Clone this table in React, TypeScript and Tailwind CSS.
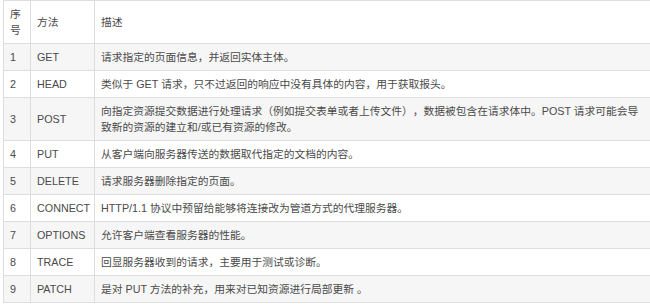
const rows: [string, string, string][] = [
  ['1', 'GET', '请求指定的页面信息，并返回实体主体。'],
  ['2', 'HEAD', '类似于 GET 请求，只不过返回的响应中没有具体的内容，用于获取报头。'],
  ['3', 'POST', '向指定资源提交数据进行处理请求（例如提交表单或者上传文件），数据被包含在请求体中。POST 请求可能会导致新的资源的建立和/或已有资源的修改。'],
  ['4', 'PUT', '从客户端向服务器传送的数据取代指定的文档的内容。'],
  ['5', 'DELETE', '请求服务器删除指定的页面。'],
  ['6', 'CONNECT', 'HTTP/1.1 协议中预留给能够将连接改为管道方式的代理服务器。'],
  ['7', 'OPTIONS', '允许客户端查看服务器的性能。'],
  ['8', 'TRACE', '回显服务器收到的请求，主要用于测试或诊断。'],
  ['9', 'PATCH', '是对 PUT 方法的补充，用来对已知资源进行局部更新 。'],
];

export default function App() {
  return (
    <div
      className="w-[650px] h-[304px] overflow-hidden bg-white pl-[3px] text-[#4a4a4a] text-[10.75px] leading-[16px] [text-spacing-trim:space-all]"
      style={{ fontFamily: '"Liberation Sans", "Noto Sans CJK SC", sans-serif' }}
    >
      <table className="w-[700px] border-collapse table-fixed">
        <colgroup>
          <col className="w-[27px]" />
          <col className="w-[64px]" />
          <col />
        </colgroup>
        <thead>
          <tr className="bg-white">
            <th className="border border-[#dddddd] px-[6px] py-[5px] h-[43px] text-left font-normal">序号</th>
            <th className="border border-[#dddddd] px-[6px] py-[5px] text-left font-normal">方法</th>
            <th className="border border-[#dddddd] px-[6px] py-[5px] text-left font-normal">描述</th>
          </tr>
        </thead>
        <tbody>
          {rows.map(([n, m, d], i) => (
            <tr key={n} className={i % 2 === 0 ? 'bg-[#f6f6f6]' : 'bg-white'}>
              <td className="border border-[#dddddd] px-[6px] py-[5px] h-[27px] align-middle">{n}</td>
              <td className="border border-[#dddddd] px-[6px] py-[5px] align-middle">{m}</td>
              <td className="border border-[#dddddd] px-[6px] py-[5px] pr-[62px] align-middle">{d}</td>
            </tr>
          ))}
        </tbody>
      </table>
    </div>
  );
}
